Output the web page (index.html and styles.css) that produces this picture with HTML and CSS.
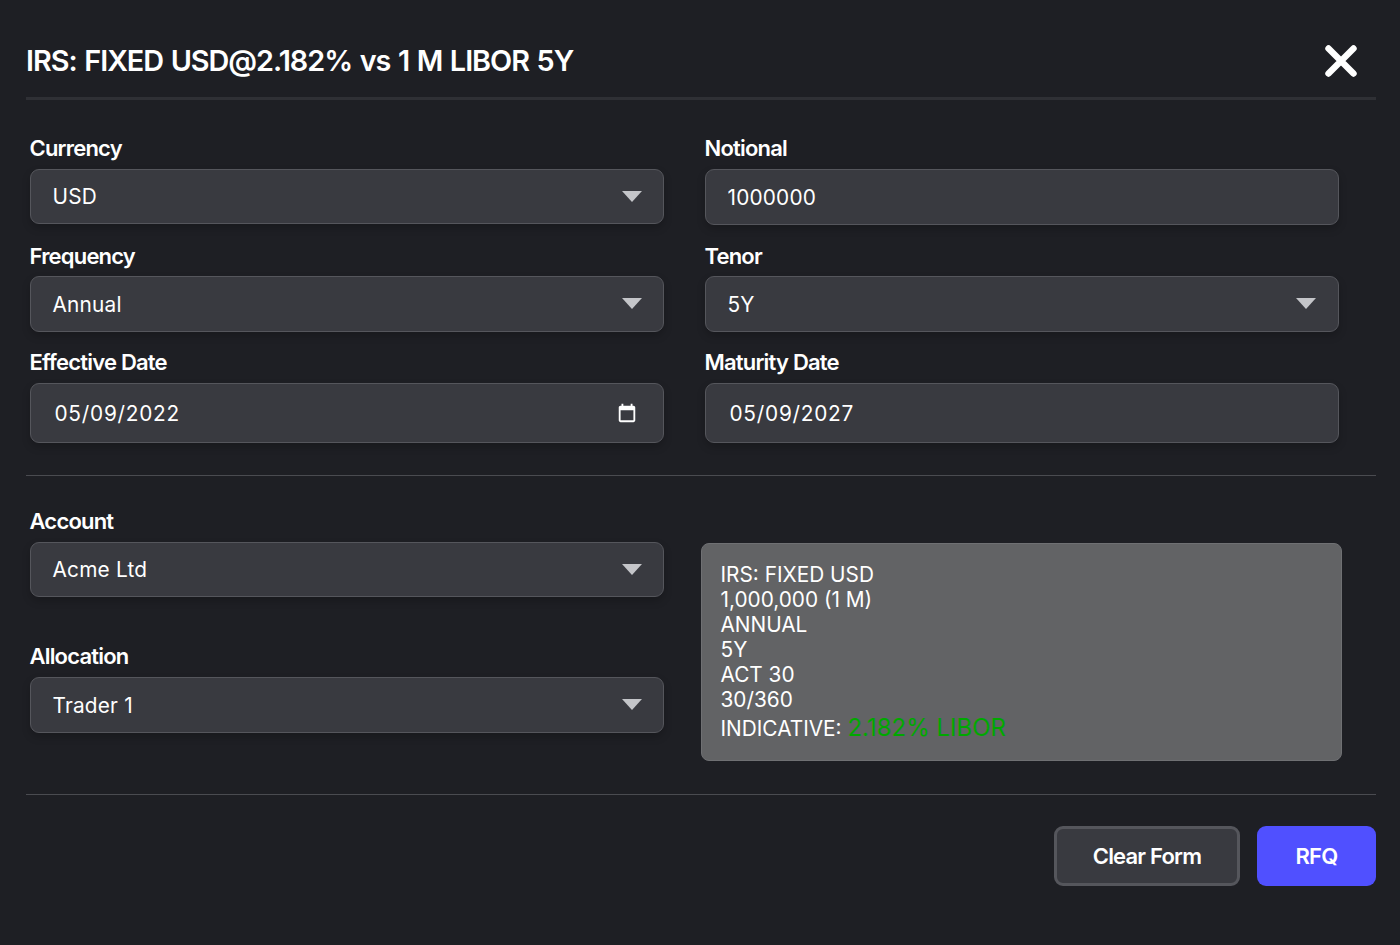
FILE: index.html
```html
<!DOCTYPE html>
<html lang="en">
<head>
    <meta charset="UTF-8">
    <title>IRS RFQ</title>
    <link rel="stylesheet" href="styles.css">
</head>
<body>
    <div class="modal">
        <header class="modal-header">
            <h1>IRS: FIXED USD@2.182% vs 1 M LIBOR 5Y</h1>
            <button class="close" aria-label="Close">
                <svg width="32" height="32" viewBox="0 0 32 32"><path d="M3.5 3.5 L28.5 28.5 M28.5 3.5 L3.5 28.5" stroke="#fff" stroke-width="6.4" stroke-linecap="round"/></svg>
            </button>
        </header>

        <section class="fields">
            <div class="field">
                <label>Currency</label>
                <div class="control select-control">USD<span class="arrow"></span></div>
            </div>
            <div class="field">
                <label>Notional</label>
                <div class="control">1000000</div>
            </div>
            <div class="field field-tight">
                <label>Frequency</label>
                <div class="control select-control tall">Annual<span class="arrow"></span></div>
            </div>
            <div class="field field-tight">
                <label>Tenor</label>
                <div class="control select-control tall">5Y<span class="arrow arrow-right"></span></div>
            </div>
            <div class="field">
                <label>Effective Date</label>
                <div class="control date">05/09/2022
                    <svg class="cal" width="22" height="22" viewBox="0 0 24 24"><path fill="#fff" d="M19 4h-1V2h-2v2H8V2H6v2H5c-1.1 0-2 .9-2 2v14c0 1.1.9 2 2 2h14c1.1 0 2-.9 2-2V6c0-1.100-.9-2-2-2zm0 16H5V9h14v11z"/></svg>
                </div>
            </div>
            <div class="field">
                <label>Maturity Date</label>
                <div class="control date">05/09/2027</div>
            </div>
        </section>

        <hr class="rule">

        <section class="lower">
            <div class="lower-left">
                <div class="field">
                    <label>Account</label>
                    <div class="control select-control">Acme Ltd<span class="arrow"></span></div>
                </div>
                <div class="field">
                    <label>Allocation</label>
                    <div class="control select-control tall">Trader 1<span class="arrow"></span></div>
                </div>
            </div>
            <div class="summary">
                <div>IRS: FIXED USD</div>
                <div>1,000,000 (1 M)</div>
                <div>ANNUAL</div>
                <div>5Y</div>
                <div>ACT 30</div>
                <div>30/360</div>
                <div class="indicative">INDICATIVE: <span>2.182% LIBOR</span></div>
            </div>
        </section>

        <hr class="rule">

        <footer class="actions">
            <button class="btn btn-clear">Clear Form</button>
            <button class="btn btn-rfq">RFQ</button>
        </footer>
    </div>
</body>
</html>
```

FILE: styles.css
```css
*{
    box-sizing:border-box;
}
body{
    margin:0;
    background:#1e1f24;
    color:#fff;
    font-family:Inter, "Liberation Sans", sans-serif;
}
.modal{
    padding:26px 24px 59px 26px;
}
.modal-header{
    display:flex;
    justify-content:space-between;
    align-items:center;
    height:74px;
    border-bottom:3px solid #2f3035;
    padding-bottom:1px;
}
.modal-header h1{
    margin:0;
    font-size:28.8px;
    line-height:36px;
    font-weight:600;
    letter-spacing:-1px;
    word-spacing:1.3px;
}
.close{
    width:32px;
    height:32px;
    padding:0;
    margin-right:19px;
    border:none;
    background:none;
    display:flex;
}
.fields{
    display:grid;
    grid-template-columns:634px 634px;
    column-gap:41px;
    row-gap:17px;
    padding:35px 0 0 4px;
}
.field label{
    display:block;
    height:26px;
    line-height:26px;
    margin-bottom:8px;
    margin-left:-0.5px;
    font-size:22px;
    font-weight:600;
    letter-spacing:-0.8px;
}
.field-tight label{
    margin-top:1px;
    margin-bottom:7px;
}
.control{
    position:relative;
    display:flex;
    align-items:center;
    height:56px;
    padding-left:21.5px;
    background:#393a40;
    border:1px solid #55565c;
    border-radius:9px;
    box-shadow:0 4px 8px rgba(0,0,0,0.2);
    font-size:20.8px;
    letter-spacing:0.2px;
}
.select-control{
    height:55px;
}
.select-control.tall{
    height:56px;
}
.date{
    height:60px;
    padding-left:23.5px;
    letter-spacing:0.75px;
}
.arrow{
    position:absolute;
    right:21px;
    top:21px;
    width:0;
    height:0;
    border-left:10.500px solid transparent;
    border-right:10.500px solid transparent;
    border-top:11px solid #c4c5c9;
}
.arrow-right{
    right:22px;
}
.cal{
    position:absolute;
    right:25.5px;
    top:18px;
}
.rule{
    margin:0;
    border:none;
    border-top:1px solid #4a4b50;
}
.fields + .rule{
    margin-top:32px;
}
.lower{
    display:grid;
    grid-template-columns:634px 641px;
    column-gap:37px;
    padding:32px 0 33px 4px;
}
.lower-left{
    display:flex;
    flex-direction:column;
    gap:46px;
}
.summary{
    height:218px;
    margin-top:35px;
    padding:18px 19px 0 18.5px;
    background:#626365;
    border:1px solid #6f7073;
    border-radius:8px;
    font-size:20.8px;
    line-height:25px;
}
.indicative{
    line-height:32px;
}
.indicative span{
    color:#00a800;
    font-size:24px;
}
.actions{
    display:flex;
    justify-content:flex-end;
    gap:17px;
    padding-top:31px;
}
.btn{
    height:60px;
    border-radius:9px;
    color:#fff;
    font-family:inherit;
    font-size:22px;
    font-weight:600;
    letter-spacing:-0.8px;
}
.btn-clear{
    width:186px;
    background:#393a40;
    border:3px solid #55565c;
}
.btn-rfq{
    width:119px;
    background:#5050ff;
    border:none;
}
```
